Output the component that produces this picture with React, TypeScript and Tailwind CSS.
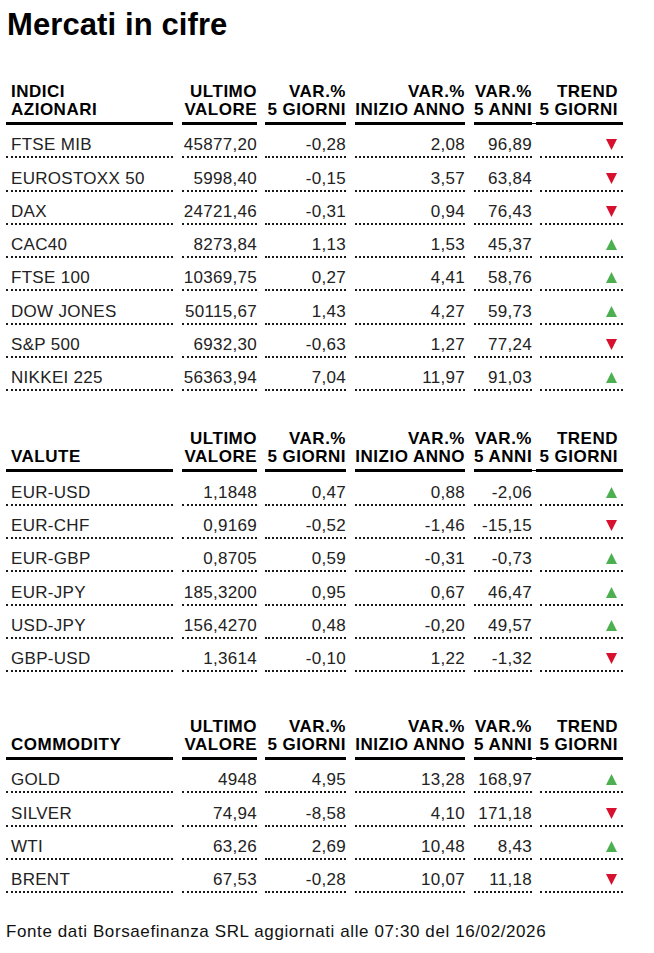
import React from "react";

type Row = { name: string; v: string[]; up: boolean };

const HEAD_COLS = [
  "ml-[6px] w-[167px] pl-[5px] text-left",
  "ml-[9px] w-[75px] text-right",
  "ml-[8px] w-[81px] text-right",
  "ml-[9px] w-[110px] text-right",
  "ml-[9px] w-[58px] text-right",
  "ml-[4px] w-[87px] pr-[5px] text-right relative",
];

const ROW_COLS = [
  "ml-[6px] w-[167px] pl-[5px] justify-start",
  "ml-[9px] w-[75px] justify-end",
  "ml-[8px] w-[81px] justify-end",
  "ml-[9px] w-[110px] justify-end",
  "ml-[9px] w-[58px] justify-end",
  "ml-[8px] w-[83px] pr-[6px] justify-end",
];

const indici: Row[] = [
  { name: "FTSE MIB", v: ["45877,20", "-0,28", "2,08", "96,89"], up: false },
  { name: "EUROSTOXX 50", v: ["5998,40", "-0,15", "3,57", "63,84"], up: false },
  { name: "DAX", v: ["24721,46", "-0,31", "0,94", "76,43"], up: false },
  { name: "CAC40", v: ["8273,84", "1,13", "1,53", "45,37"], up: true },
  { name: "FTSE 100", v: ["10369,75", "0,27", "4,41", "58,76"], up: true },
  { name: "DOW JONES", v: ["50115,67", "1,43", "4,27", "59,73"], up: true },
  { name: "S&P 500", v: ["6932,30", "-0,63", "1,27", "77,24"], up: false },
  { name: "NIKKEI 225", v: ["56363,94", "7,04", "11,97", "91,03"], up: true },
];

const valute: Row[] = [
  { name: "EUR-USD", v: ["1,1848", "0,47", "0,88", "-2,06"], up: true },
  { name: "EUR-CHF", v: ["0,9169", "-0,52", "-1,46", "-15,15"], up: false },
  { name: "EUR-GBP", v: ["0,8705", "0,59", "-0,31", "-0,73"], up: true },
  { name: "EUR-JPY", v: ["185,3200", "0,95", "0,67", "46,47"], up: true },
  { name: "USD-JPY", v: ["156,4270", "0,48", "-0,20", "49,57"], up: true },
  { name: "GBP-USD", v: ["1,3614", "-0,10", "1,22", "-1,32"], up: false },
];

const commodity: Row[] = [
  { name: "GOLD", v: ["4948", "4,95", "13,28", "168,97"], up: true },
  { name: "SILVER", v: ["74,94", "-8,58", "4,10", "171,18"], up: false },
  { name: "WTI", v: ["63,26", "2,69", "10,48", "8,43"], up: true },
  { name: "BRENT", v: ["67,53", "-0,28", "10,07", "11,18"], up: false },
];

function Tri({ up }: { up: boolean }) {
  return up ? (
    <svg width="11" height="11" viewBox="0 0 11 11" className="mb-[4px] block">
      <polygon points="5.5,0 11,11 0,11" fill="#4caf50" />
    </svg>
  ) : (
    <svg width="11" height="11" viewBox="0 0 11 11" className="mb-[4px] block">
      <polygon points="0,0 11,0 5.5,11" fill="#d7102e" />
    </svg>
  );
}

function Header({ first }: { first: React.ReactNode }) {
  const labels: React.ReactNode[] = [
    first,
    <>ULTIMO<br />VALORE</>,
    <>VAR.%<br />5 GIORNI</>,
    <>VAR.%<br />INIZIO ANNO</>,
    <>VAR.%<br />5 ANNI</>,
    <>TREND<br />5 GIORNI</>,
  ];
  return (
    <div className="flex h-[42px] items-end">
      {labels.map((l, i) => (
        <div
          key={i}
          className={`${HEAD_COLS[i]} border-b-[3px] border-black pb-[3px] text-[17px] font-bold leading-[18px] tracking-[0.5px] text-black whitespace-nowrap`}
        >
          {l}
          {i === 5 && (
            <span className="absolute bottom-[-2px] left-[-4px] h-px w-[4px] bg-black" />
          )}
        </div>
      ))}
    </div>
  );
}

function DataRow({ r }: { r: Row }) {
  const cells: React.ReactNode[] = [r.name, ...r.v, <Tri up={r.up} />];
  return (
    <div className="flex h-[33.3px]">
      {cells.map((c, i) => (
        <div
          key={i}
          className={`${ROW_COLS[i]} flex h-full items-end border-b-2 border-dotted border-[#1a1a1a] pb-[2px] text-[17px] leading-[19px] tracking-[0.3px] text-[#222] whitespace-nowrap`}
        >
          {c}
        </div>
      ))}
    </div>
  );
}

function Section({ first, rows, className }: { first: React.ReactNode; rows: Row[]; className: string }) {
  return (
    <div className={className}>
      <Header first={first} />
      {rows.map((r) => (
        <DataRow key={r.name} r={r} />
      ))}
    </div>
  );
}

export default function App() {
  return (
    <div className="h-[953px] w-[654px] bg-white font-['Liberation_Sans',Arial,sans-serif] text-black">
      <h1 className="pl-[7px] pt-[7px] text-[31px] font-bold leading-[36px] tracking-[0.1px]">
        Mercati in cifre
      </h1>
      <Section className="mt-[40px]" first={<>INDICI<br />AZIONARI</>} rows={indici} />
      <Section className="mt-[39px]" first={<>VALUTE</>} rows={valute} />
      <Section className="mt-[46px]" first={<>COMMODITY</>} rows={commodity} />
      <p className="ml-[6px] mt-[29px] text-[17px] leading-[19px] tracking-[0.6px] text-[#111]">
        Fonte dati Borsaefinanza SRL aggiornati alle 07:30 del 16/02/2026
      </p>
    </div>
  );
}
